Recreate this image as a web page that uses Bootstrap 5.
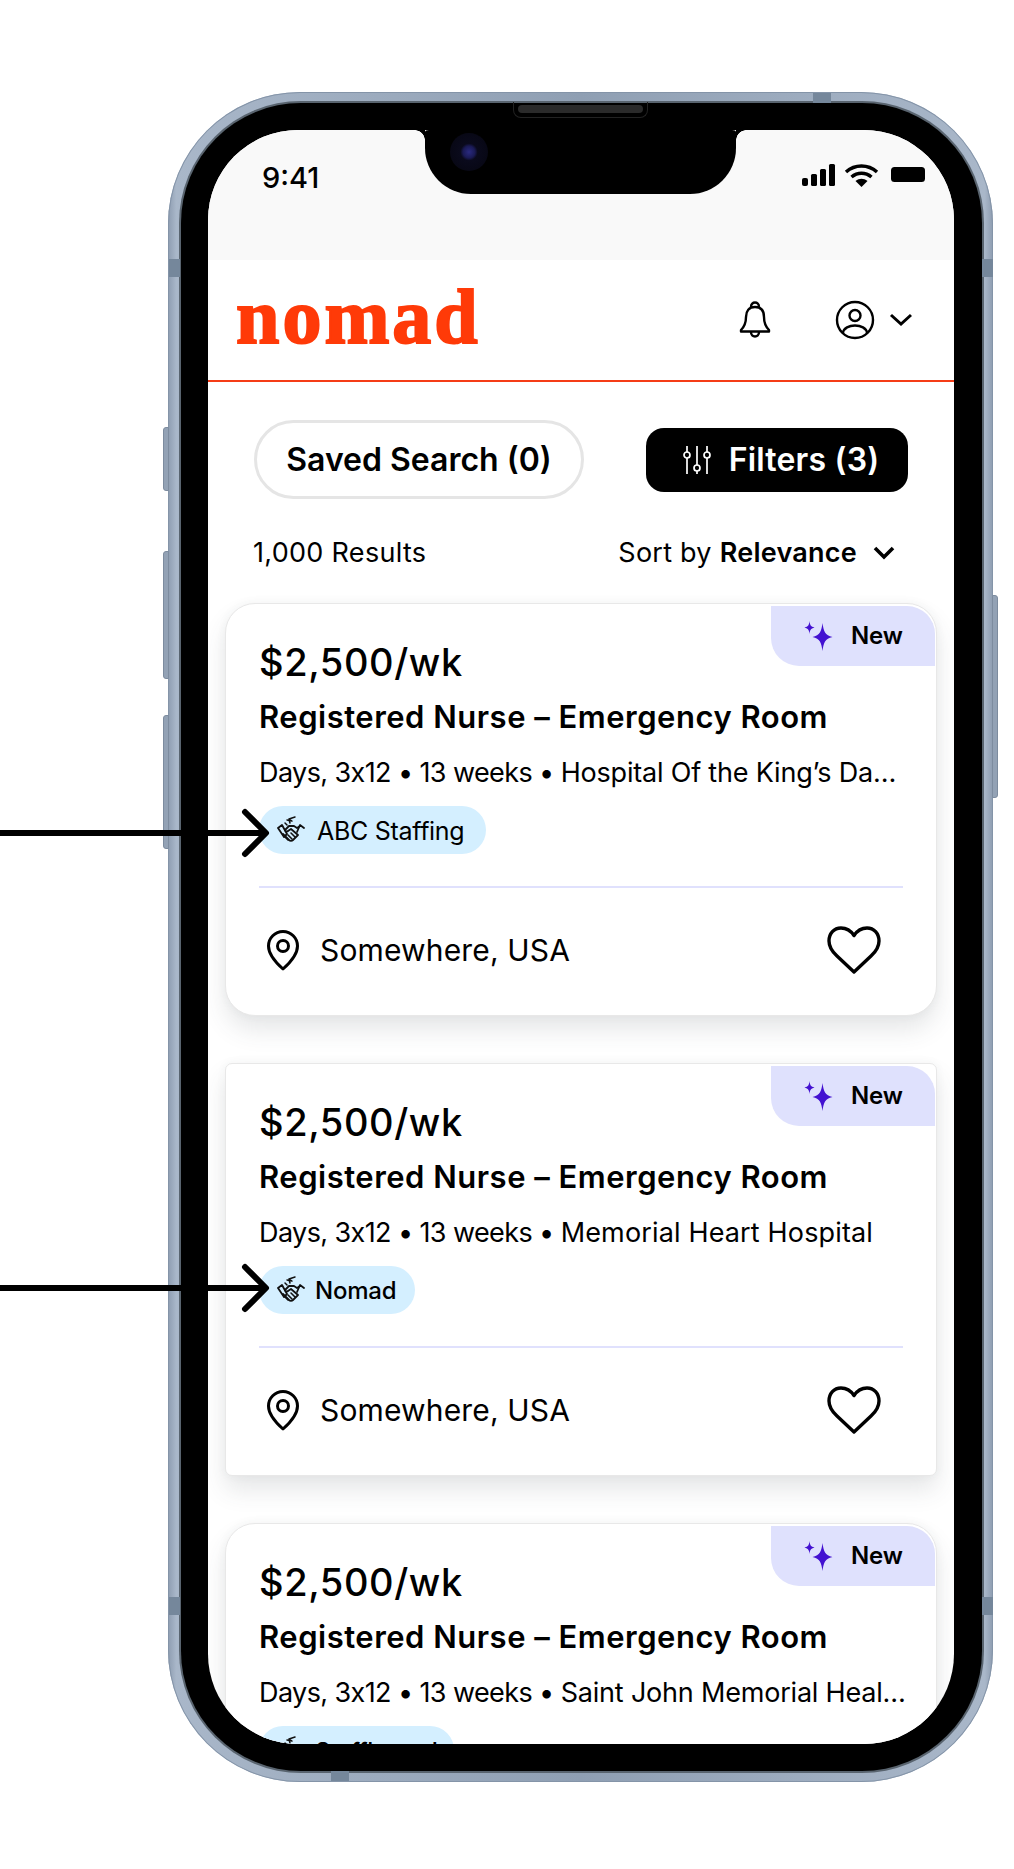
<!DOCTYPE html>
<html lang="en">
<head>
    <meta charset="UTF-8">
    <meta name="viewport" content="width=device-width, initial-scale=1">
    <title>Nomad - Job results</title>
    <link href="https://cdn.jsdelivr.net/npm/bootstrap@5.3.0/dist/css/bootstrap.min.css" rel="stylesheet">
    <style>
        body { background: #fff; font-family: Inter, "Noto Sans", sans-serif; color: #000; }
        .page-wrap { position: relative; width: 1014px; height: 1869px; padding: 92px 0 0 168px; overflow: hidden; }

        /* device */
        .phone-metal { position: relative; width: 825px; height: 1690px; padding: 11px 11px 11px 13px; border-radius: 132px;
            background: linear-gradient(90deg, #8d9cb0 0, #a9b7c9 1%, #8f9fb3 50%, #a9b7c9 99%, #8d9cb0 100%);
            box-shadow: inset 0 0 0 1px #8494a8; }
        .phone-bezel { height: 100%; padding: 27px 28px 27px 27px; background: #000; border-radius: 120px; box-shadow: 0 0 0 2px #59646f; }
        .phone-screen { position: relative; height: 1614px; overflow: hidden; background: #fff; border-radius: 90px; }
        .side-key { position: absolute; width: 6px; background: #93a2b5; border: 1px solid #7d8c9f; }
        .key-left { left: -5px; border-radius: 3px 0 0 3px; }
        .key-right { right: -5px; top: 503px; height: 203px; border-radius: 0 3px 3px 0; }
        .key-mute { top: 335px; height: 64px; }
        .key-up { top: 459px; height: 128px; }
        .key-down { top: 623px; height: 134px; }
        .band { position: absolute; background: #75879b; }
        .band-v { width: 11px; height: 18px; }
        .band-h { width: 18px; height: 10px; }
        .band-tl { left: 1px; top: 167px; }
        .band-tr { right: 0; top: 167px; }
        .band-bl { left: 1px; top: 1505px; }
        .band-br { right: 0; top: 1505px; }
        .band-top { left: 645px; top: 1px; }
        .band-bottom { left: 163px; bottom: 1px; }
        .speaker { position: absolute; left: 345px; top: 10px; width: 135px; height: 16px; border: 1px solid #222; border-top: 0; border-radius: 0 0 8px 8px; }
        .speaker::after { content: ""; position: absolute; left: 4px; right: 4px; top: 3px; height: 8px; border-radius: 4px; background: #2a2a2a; }

        .notch { position: absolute; left: 217px; top: 0; width: 311px; height: 64px; background: #000; border-radius: 4px 4px 46px 46px / 2px 2px 46px 46px; }
        .notch::before, .notch::after { content: ""; position: absolute; top: 0; width: 10px; height: 10px; }
        .notch::before { left: -10px; background: radial-gradient(circle at 0 100%, transparent 9.5px, #000 10px); }
        .notch::after { right: -10px; background: radial-gradient(circle at 100% 100%, transparent 9.5px, #000 10px); }
        .cam-lens { position: absolute; left: 25px; top: 3px; width: 38px; height: 38px; border-radius: 50%;
            background: radial-gradient(circle, #2a2a80 0, #1a1a55 22%, #0a0a1c 32%, #060610 100%); }

        .status-strip { height: 130px; padding: 31px 29px 0 54px; background: #f9f9f9; }
        .clock-text { font-size: 29px; line-height: 34px; font-weight: 500; }
        .status-icons { margin-top: 3px; }
        .app-head { height: 122px; padding: 0 41px 0 28px; border-bottom: 2px solid #f53c17; }
        .brand-word { font-family: "Liberation Serif", serif; font-weight: 700; font-size: 78px; line-height: 1; letter-spacing: 3px; color: #ff3a08; -webkit-text-stroke: 2px #ff3a08; margin-top: -6px; }
        .bell-ico { margin-right: 64px; }
        .caret-ico { margin-left: 14px; }

        /* toolbar */
        .tool-row { margin-top: 38px; padding: 0 46px; }
        .btn-saved { width: 330px; height: 79px; border: 3px solid #e5e5e5; background: #fff; color: #000; font-size: 32px; font-weight: 600; }
        .btn-saved:hover { background: #fff; color: #000; border-color: #e5e5e5; }
        .btn-filters { width: 262px; height: 64px; gap: 18px; padding-left: 8px !important; background: #000; color: #fff; border-radius: 18px; font-size: 32px; font-weight: 600; letter-spacing: .2px; border: 0; }
        .btn-filters:hover { background: #000; color: #fff; }
        .count-row { height: 104px; padding: 4px 59px 0 45px; font-size: 27px; }
        .count-total { letter-spacing: .3px; }
        .count-row strong { font-weight: 600; }
        .sort-by { letter-spacing: .25px; }

        /* job cards */
        .job-list { padding: 0 17px; }
        .job-card { position: relative; height: 413px; margin-bottom: 47px; padding: 35px 33px 0; border: 1px solid #e8e8e8; border-radius: 30px;
            box-shadow: 0 14px 24px rgba(60, 70, 80, .13), 0 0 10px rgba(60, 70, 80, .05); }
        .job-card.corner-cut { border-radius: 7px; }
        .new-tag { position: absolute; top: 2px; right: 1px; width: 164px; height: 60px; background: #dfe1fd; border-radius: 0 28px 0 28px; font-size: 24px; font-weight: 600; letter-spacing: -.2px; padding-left: 33px; gap: 17px; }
        .job-pay { font-size: 38px; line-height: 46px; font-weight: 500; letter-spacing: .6px; }
        .job-title { font-size: 31px; line-height: 40px; font-weight: 600; letter-spacing: .5px; margin: 12px 0 0; }
        .job-meta { font-size: 27px; line-height: 36px; margin-top: 18px; white-space: nowrap; letter-spacing: -.6px; }
        .meta-place { letter-spacing: -.2px; }
        .meta-place.place-wide { letter-spacing: .15px; }
        .agency-pill { height: 48px; margin-top: 15px; padding: 0 22px 0 18px; gap: 12px; background: #d4efff; font-size: 25px; letter-spacing: -.3px; width: fit-content; }
        .agency-pill.pill-tight { font-size: 24px; font-weight: 500; letter-spacing: -.5px; gap: 10px; padding-right: 17px; }
        .agency-pill.pill-nomad { letter-spacing: -.2px; padding-right: 19px; }
        .pill-label { padding-top: 3px; }
        .pill-nomad .pill-label { padding-top: 1px; }
        .job-rule { height: 2px; margin: 32px 0 0; background: #e0e1fd; opacity: 1; border: 0; }
        .job-foot { height: 124px; padding: 0 22px 0 7px; font-size: 30px; letter-spacing: .15px; }
        .place-line { gap: 20px; }

        .note-arrow { position: absolute; left: 0; width: 280px; height: 50px; }
        .arrow-one { top: 808px; }
        .arrow-two { top: 1263px; }
    </style>
</head>
<body class="m-0">
    <svg width="0" height="0" class="d-block">
        <symbol id="ico-spark" viewBox="0 0 30 30">
            <path fill="#4311d1" d="M18.500 2c1 8 2.500 12.500 10 14-7.500 1.500-9 6-10 14-1-8-2.500-12.500-10-14 7.500-1.500 9-6 10-14zM5.500 0c.5 4 1 5.500 5 6.500-4 1-4.500 2.500-5 6.500-.5-4-1-5.500-5-6.500 4-1 4.500-2.500 5-6.500z"/>
        </symbol>
        <symbol id="ico-shake" viewBox="0 0 28 28" fill="none" stroke="#111" stroke-width="1.800" stroke-linecap="round" stroke-linejoin="round">
            <path d="M1 12l4-3 5 9-3 3zM27 12l-4-3-3 7"/>
            <path d="M6 18l6 6c1 1 3 1 4 0l5-5-7-6-3 2c-1 1-3 0-3-1l4-4h5l3 2 3-2"/>
            <path d="M8 21l3 3M11 19l4 4M14 17l4 4" stroke-width="1.600"/>
            <path d="M8 7l2 2M12 4l1 3M18 1l-6 2 3 2-5-1" stroke-width="1.500"/>
        </symbol>
        <symbol id="ico-pin" viewBox="0 0 34 42" fill="none" stroke="#000" stroke-width="3" stroke-linejoin="round">
            <path d="M17 40C8 32 2.500 25 2.500 17a14.500 14.500 0 0 1 29 0c0 8-5.500 15-14.500 23z"/>
            <circle cx="17" cy="17" r="5.500"/>
        </symbol>
        <symbol id="ico-heart" viewBox="0 0 54 48" fill="none" stroke="#000" stroke-width="3.400" stroke-linejoin="round">
            <path d="M27 9.500C23 3.500 18 2 14 2 7 2 2 7.500 2 15c0 6 3 10.500 8 15l17 16 17-16c5-4.500 8-9 8-15 0-7.500-5-13-12-13-4 0-9 1.500-13 7.500z"/>
        </symbol>
    </svg>

    <div class="page-wrap">
        <div class="phone-metal">
            <span class="side-key key-left key-mute"></span>
            <span class="side-key key-left key-up"></span>
            <span class="side-key key-left key-down"></span>
            <span class="side-key key-right"></span>
            <span class="band band-v band-tl"></span>
            <span class="band band-v band-tr"></span>
            <span class="band band-v band-bl"></span>
            <span class="band band-v band-br"></span>
            <span class="band band-h band-top"></span>
            <span class="band band-h band-bottom"></span>

            <div class="phone-bezel">
                <div class="phone-screen">
                    <div class="notch"><span class="cam-lens"></span></div>

                    <div class="status-strip d-flex justify-content-between align-items-start">
                        <span class="clock-text">9:41</span>
                        <svg width="123" height="24" viewBox="0 0 123 24" class="status-icons">
                            <rect x="0" y="14" width="6" height="8" rx="2"/>
                            <rect x="9" y="10" width="6" height="12" rx="1.500"/>
                            <rect x="18" y="5" width="6" height="17" rx="1.500"/>
                            <rect x="27" y="0" width="6" height="22" rx="1.500"/>
                            <path d="M44 8c9-8 22-8 31 0" fill="none" stroke="#000" stroke-width="3.500"/>
                            <path d="M49.500 13c6-5 14-5 20 0" fill="none" stroke="#000" stroke-width="3.500"/>
                            <path d="M53.500 17c4-3 8-3 12 0l-6 6z"/>
                            <rect x="89" y="3" width="34" height="15" rx="3.500"/>
                        </svg>
                    </div>

                    <header class="app-head d-flex justify-content-between align-items-center">
                        <div class="brand-word">nomad</div>
                        <div class="d-flex align-items-center">
                            <svg width="32" height="40" viewBox="0 0 32 40" fill="none" stroke="#000" stroke-width="2.400" stroke-linejoin="round" class="bell-ico">
                                <path d="M16 7c-6 0-9 4-9 10 0 6-1 9-5 13v1.500h28V30c-4-4-5-7-5-13 0-6-3-10-9-10z"/>
                                <path d="M12 7c0-6 8-6 8 0M12 32c0 6 8 6 8 0"/>
                            </svg>
                            <svg width="40" height="40" viewBox="0 0 40 40" fill="none" stroke="#000" stroke-width="2.400">
                                <circle cx="20" cy="20" r="18"/>
                                <circle cx="20" cy="15.500" r="5.500"/>
                                <path d="M8 33c1-10 23-10 24 0"/>
                            </svg>
                            <svg width="24" height="14" viewBox="0 0 24 14" fill="none" stroke="#000" stroke-width="3" class="caret-ico">
                                <path d="M2 2l10 9 10-9"/>
                            </svg>
                        </div>
                    </header>

                    <div class="tool-row d-flex justify-content-between align-items-center">
                        <button class="btn btn-saved rounded-pill p-0" type="button">Saved Search (0)</button>
                        <button class="btn btn-filters d-flex align-items-center justify-content-center p-0" type="button">
                            <svg width="28" height="30" viewBox="0 0 28 30" fill="none" stroke="#fff" stroke-width="1.700">
                                <path d="M4 1v6M4 13v16M14 1v19M14 26v3M24 1v6M24 13v16"/>
                                <circle cx="4" cy="10" r="3"/>
                                <circle cx="14" cy="23" r="3"/>
                                <circle cx="24" cy="10" r="3"/>
                            </svg>
                            <span>Filters (3)</span>
                        </button>
                    </div>

                    <div class="count-row d-flex justify-content-between align-items-center">
                        <span class="count-total">1,000 Results</span>
                        <span class="d-flex align-items-center gap-3">
                            <span class="sort-by">Sort by <strong>Relevance</strong></span>
                            <svg width="22" height="14" viewBox="0 0 22 14" fill="none" stroke="#000" stroke-width="3.600"><path d="M2 2l9 9 9-9"/></svg>
                        </span>
                    </div>

                    <div class="job-list">
                        <article class="job-card bg-white">
                            <div class="new-tag d-flex align-items-center">
                                <svg width="30" height="30"><use href="#ico-spark"/></svg>
                                <span>New</span>
                            </div>
                            <div class="job-pay">$2,500/wk</div>
                            <h2 class="job-title">Registered Nurse – Emergency Room</h2>
                            <div class="job-meta">Days, 3x12 • 13 weeks • <span class="meta-place">Hospital Of the King’s Da…</span></div>
                            <div class="agency-pill d-flex align-items-center rounded-pill">
                                <svg width="28" height="28"><use href="#ico-shake"/></svg>
                                <span class="pill-label">ABC Staffing</span>
                            </div>
                            <hr class="job-rule">
                            <div class="job-foot d-flex justify-content-between align-items-center">
                                <span class="place-line d-flex align-items-center">
                                    <svg width="34" height="42"><use href="#ico-pin"/></svg>
                                    <span>Somewhere, USA</span>
                                </span>
                                <svg width="54" height="48"><use href="#ico-heart"/></svg>
                            </div>
                        </article>

                        <article class="job-card corner-cut bg-white">
                            <div class="new-tag d-flex align-items-center">
                                <svg width="30" height="30"><use href="#ico-spark"/></svg>
                                <span>New</span>
                            </div>
                            <div class="job-pay">$2,500/wk</div>
                            <h2 class="job-title">Registered Nurse – Emergency Room</h2>
                            <div class="job-meta">Days, 3x12 • 13 weeks • <span class="meta-place place-wide">Memorial Heart Hospital</span></div>
                            <div class="agency-pill pill-tight pill-nomad d-flex align-items-center rounded-pill">
                                <svg width="28" height="28"><use href="#ico-shake"/></svg>
                                <span class="pill-label">Nomad</span>
                            </div>
                            <hr class="job-rule">
                            <div class="job-foot d-flex justify-content-between align-items-center">
                                <span class="place-line d-flex align-items-center">
                                    <svg width="34" height="42"><use href="#ico-pin"/></svg>
                                    <span>Somewhere, USA</span>
                                </span>
                                <svg width="54" height="48"><use href="#ico-heart"/></svg>
                            </div>
                        </article>

                        <article class="job-card bg-white">
                            <div class="new-tag d-flex align-items-center">
                                <svg width="30" height="30"><use href="#ico-spark"/></svg>
                                <span>New</span>
                            </div>
                            <div class="job-pay">$2,500/wk</div>
                            <h2 class="job-title">Registered Nurse – Emergency Room</h2>
                            <div class="job-meta">Days, 3x12 • 13 weeks • <span class="meta-place">Saint John Memorial Heal…</span></div>
                            <div class="agency-pill pill-tight d-flex align-items-center rounded-pill">
                                <svg width="28" height="28"><use href="#ico-shake"/></svg>
                                <span class="pill-label">Staffhound</span>
                            </div>
                        </article>
                    </div>
                </div>
            </div>
            <span class="speaker"></span>
        </div>

        <svg class="note-arrow arrow-one" viewBox="0 0 280 50" fill="none" stroke="#000" stroke-width="6" stroke-linecap="round" stroke-linejoin="round">
            <path d="M-5 25h268M245 4l21 21-21 21"/>
        </svg>
        <svg class="note-arrow arrow-two" viewBox="0 0 280 50" fill="none" stroke="#000" stroke-width="6" stroke-linecap="round" stroke-linejoin="round">
            <path d="M-5 25h268M245 4l21 21-21 21"/>
        </svg>
    </div>

    <script src="https://cdn.jsdelivr.net/npm/bootstrap@5.3.0/dist/js/bootstrap.bundle.min.js"></script>
</body>
</html>
